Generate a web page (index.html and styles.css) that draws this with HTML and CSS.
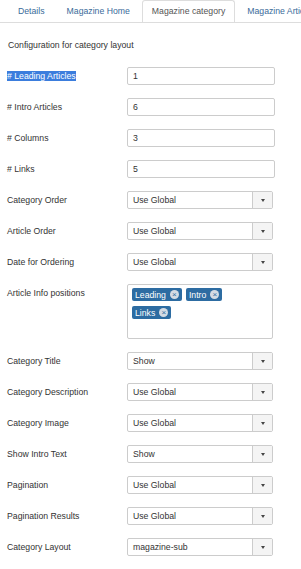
FILE: index.html
```html
<!DOCTYPE html>
<html lang="en">
<head>
    <meta charset="UTF-8">
    <meta name="viewport" content="width=device-width, initial-scale=1.0">
    <title>Magazine category</title>
    <link rel="stylesheet" href="styles.css">
</head>
<body>

<ul class="nav-tabs">
    <li class="tab">Details</li>
    <li class="tab">Magazine Home</li>
    <li class="tab active">Magazine category</li>
    <li class="tab">Magazine Article</li>
</ul>

<div class="tab-content">
    <p class="intro">Configuration for category layout</p>

    <div class="fields">
        <div class="row">
            <label class="label"><span class="selected">#&nbsp;Leading Articles</span></label>
            <div class="input">1</div>
        </div>
        <div class="row">
            <label class="label"># Intro Articles</label>
            <div class="input">6</div>
        </div>
        <div class="row">
            <label class="label"># Columns</label>
            <div class="input">3</div>
        </div>
        <div class="row">
            <label class="label"># Links</label>
            <div class="input">5</div>
        </div>
        <div class="row">
            <label class="label">Category Order</label>
            <div class="select"><span class="value">Use Global</span><span class="caret-box"><span class="caret"></span></span></div>
        </div>
        <div class="row">
            <label class="label">Article Order</label>
            <div class="select"><span class="value">Use Global</span><span class="caret-box"><span class="caret"></span></span></div>
        </div>
        <div class="row">
            <label class="label">Date for Ordering</label>
            <div class="select"><span class="value">Use Global</span><span class="caret-box"><span class="caret"></span></span></div>
        </div>
        <div class="row">
            <label class="label">Article Info positions</label>
            <div class="chips">
                <span class="chip">Leading<span class="chip-x">&times;</span></span>
                <span class="chip">Intro<span class="chip-x">&times;</span></span>
                <span class="chip">Links<span class="chip-x">&times;</span></span>
            </div>
        </div>
        <div class="row">
            <label class="label">Category Title</label>
            <div class="select"><span class="value">Show</span><span class="caret-box"><span class="caret"></span></span></div>
        </div>
        <div class="row">
            <label class="label">Category Description</label>
            <div class="select"><span class="value">Use Global</span><span class="caret-box"><span class="caret"></span></span></div>
        </div>
        <div class="row">
            <label class="label">Category Image</label>
            <div class="select"><span class="value">Use Global</span><span class="caret-box"><span class="caret"></span></span></div>
        </div>
        <div class="row">
            <label class="label">Show Intro Text</label>
            <div class="select"><span class="value">Show</span><span class="caret-box"><span class="caret"></span></span></div>
        </div>
        <div class="row">
            <label class="label">Pagination</label>
            <div class="select"><span class="value">Use Global</span><span class="caret-box"><span class="caret"></span></span></div>
        </div>
        <div class="row">
            <label class="label">Pagination Results</label>
            <div class="select"><span class="value">Use Global</span><span class="caret-box"><span class="caret"></span></span></div>
        </div>
        <div class="row">
            <label class="label">Category Layout</label>
            <div class="select"><span class="value">magazine-sub</span><span class="caret-box"><span class="caret"></span></span></div>
        </div>
    </div>
</div>

</body>
</html>
```

FILE: styles.css
```css
body {
    font-family: "Liberation Sans", Arial, sans-serif;
    font-size: 8.7px;
    margin: 0;
    background-color: #fff;
    color: #333;
    overflow: hidden;
}

/* Tabs */
.nav-tabs {
    display: flex;
    margin: 0;
    padding: 0 0 0 8px;
    list-style: none;
    border-bottom: 1px solid #ddd;
    height: 22px;
    white-space: nowrap;
    overflow: hidden;
}

.tab {
    padding: 0 9px;
    margin-right: 2px;
    line-height: 21px;
    color: #3a6b9a;
    border: 1px solid transparent;
    border-bottom: none;
}

.tab.active {
    color: #555;
    background-color: #fff;
    border-color: #ddd;
    height: 22px;
    border-radius: 3px 3px 0 0;
}

/* Content */
.tab-content {
    padding: 0 8px;
}

.intro {
    margin: 0;
    padding-top: 16px;
    line-height: 12px;
}

.fields {
    display: flex;
    flex-direction: column;
    gap: 13px;
    margin-top: 16px;
    padding-left: 119px;
}

.row {
    display: flex;
    position: relative;
}

.label {
    position: absolute;
    left: -120px;
    line-height: 18px;
}

.selected {
    background-color: #3b7ddd;
    color: #fff;
}

.input {
    width: 141px;
    height: 16px;
    border: 1px solid #ccc;
    border-radius: 2px;
    padding-left: 5px;
    line-height: 16px;
}

.select {
    display: flex;
    width: 144px;
    height: 16px;
    border: 1px solid #ccc;
    border-radius: 2px;
    line-height: 16px;
}

.select .value {
    flex: 1;
    padding-left: 5px;
}

.caret-box {
    width: 19px;
    border-left: 1px solid #ccc;
    background-color: #f4f4f4;
    display: flex;
    align-items: center;
    justify-content: center;
}

.caret {
    width: 0;
    height: 0;
    border-left: 2.5px solid transparent;
    border-right: 2.5px solid transparent;
    border-top: 3px solid #444;
}

/* Chips box */
.chips {
    width: 128px;
    height: 47px;
    border: 1px solid #ccc;
    border-radius: 2px;
    padding: 3px 12px 3px 4px;
    display: flex;
    flex-wrap: wrap;
    align-content: flex-start;
    gap: 5px 4px;
}

.chip {
    display: inline-flex;
    align-items: center;
    height: 13px;
    padding: 0 3px;
    background-color: #2d6ca2;
    color: #fff;
    border-radius: 2px;
    font-size: 8.7px;
}

.chip-x {
    display: inline-flex;
    align-items: center;
    justify-content: center;
    width: 9px;
    height: 9px;
    margin-left: 4px;
    border-radius: 50%;
    background-color: #d4dbe3;
    color: #2d6ca2;
    font-size: 8px;
    line-height: 9px;
}
```
